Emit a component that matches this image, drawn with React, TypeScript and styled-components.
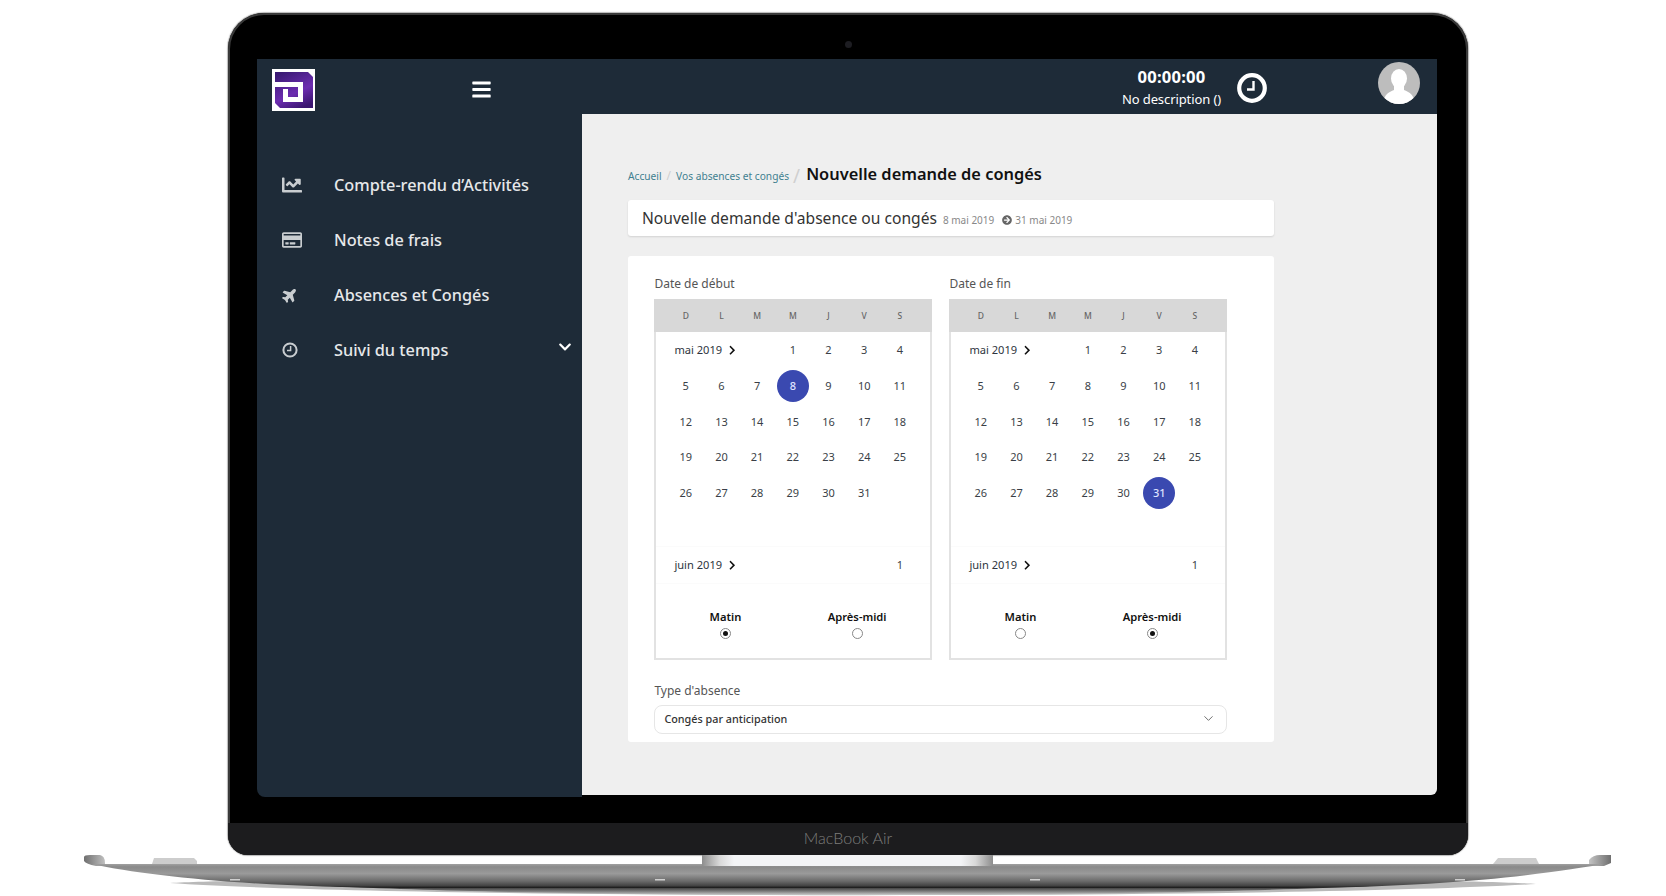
import React from "react";
import styled, { createGlobalStyle } from "styled-components";
import { FaBars, FaChartLine, FaRegCreditCard, FaPlane, FaChevronDown, FaChevronRight, FaArrowCircleRight } from "react-icons/fa";
import { ChevronDown } from "lucide-react";

const FONT = `"Noto Sans", "Open Sans", sans-serif`;

const Global = createGlobalStyle`
  * { box-sizing: border-box; }
  html, body { margin: 0; padding: 0; background: #fff; overflow: hidden; }
  body { font-family: ${FONT}; width: 1666px; height: 896px; }
`;

const Stage = styled.div`
  width: 1666px;
  height: 896px;
  padding-top: 13px;
  display: flex;
  flex-direction: column;
  background: #fff;
  overflow: hidden;
`;
const Lid = styled.div`
  width: 1240px;
  height: 842px;
  margin-left: 228px;
  display: flex;
  flex-direction: column;
  background: #000;
  border-radius: 36px 36px 20px 20px;
  box-shadow: inset 0 0 0 2px #3a3a3a, 0 0 1px 1px #b8b8b8;
  overflow: hidden;
`;
const CameraBar = styled.div`
  height: 46px;
  flex: none;
  display: flex;
  align-items: center;
  justify-content: center;
`;
const Camera = styled.span`
  width: 7px;
  height: 7px;
  margin-top: 16px;
  border-radius: 50%;
  background: #1d1d22;
`;
const Screen = styled.div`
  height: 738px;
  flex: none;
  margin: 0 31px 0 29px;
  display: flex;
  flex-direction: column;
`;
const TopBar = styled.header`
  height: 55px;
  flex: none;
  display: flex;
  align-items: flex-start;
  background: #1e2b38;
  padding: 0 17px 0 15px;
  color: #fff;
`;
const LogoBox = styled.svg`
  width: 43px;
  height: 42px;
  margin-top: 10px;
  flex: none;
`;
const MenuButton = styled.span`
  margin: 20px 0 0 156px;
  display: flex;
  font-size: 21px;
  color: #fff;
`;
const TimerBlock = styled.div`
  margin-left: auto;
  display: flex;
  flex-direction: column;
  align-items: center;
  padding-top: 6px;
`;
const TimerValue = styled.div`
  font-size: 16.6px;
  font-weight: 700;
  line-height: 24px;
  letter-spacing: 0.2px;
`;
const TimerNote = styled.div`
  font-size: 13px;
  line-height: 21px;
  letter-spacing: -0.1px;
`;
const ClockIcon = styled.svg`
  width: 30px;
  height: 30px;
  margin: 14px 111px 0 16px;
  flex: none;
`;
const AvatarIcon = styled.svg`
  width: 42px;
  height: 42px;
  margin-top: 3px;
  flex: none;
`;
const Body = styled.div`
  flex: 1;
  display: flex;
  align-items: flex-start;
  min-height: 0;
`;
const Sidebar = styled.nav`
  width: 325px;
  height: 683px;
  flex: none;
  padding-top: 43px;
  background: #1e2b38;
  border-bottom-left-radius: 8px;
`;
const NavRow = styled.div`
  height: 55.2px;
  display: flex;
  align-items: center;
  padding-left: 25px;
  color: #e6e8ea;
  font-size: 16.3px;
  font-weight: 500;
`;
const NavIcon = styled.span`
  width: 52px;
  flex: none;
  display: flex;
  color: #c9cdd0;
  font-size: ${(p) => p.$size || 20}px;
  svg { transform: ${(p) => (p.$rot ? `rotate(${p.$rot}deg)` : "none")}; }
`;
const NavChevron = styled.span`
  margin-left: auto;
  margin-right: 10px;
  margin-top: -7px;
  display: flex;
  font-size: 14px;
  color: #fff;
`;
const Content = styled.main`
  flex: 1;
  height: 681px;
  background: #efefef;
  padding: 48px 0 0 46px;
  border-bottom-right-radius: 6px;
`;
const Crumbs = styled.div`
  height: 24px;
  display: flex;
  align-items: center;
  color: #3f7f8f;
  font-size: 10.2px;
  padding-top: 3px;
`;
const CrumbSep = styled.span`
  color: #d0d0d0;
  margin: ${(p) => (p.$big ? "0 4px 0 4px" : "0 5px")};
  font-size: ${(p) => p.$big || 12}px;
`;
const CrumbTitle = styled.h1`
  margin: -4px 0 0 2px;
  font-size: 16.4px;
  font-weight: 600;
  color: #111;
`;
const HeadCard = styled.div`
  width: 646px;
  height: 36px;
  margin-top: 14px;
  display: flex;
  align-items: center;
  padding: 0 14px;
  background: #fff;
  border-radius: 3px;
  box-shadow: 0 1px 2px rgba(0, 0, 0, 0.12);
`;
const HeadTitle = styled.span`
  font-size: 15.6px;
  color: #333;
  margin-top: -1px;
`;
const HeadDates = styled.span`
  display: flex;
  align-items: center;
  margin: 3px 0 0 6px;
  font-size: 10px;
  color: #888;
  gap: 3px;
  svg { color: #666; font-size: 10px; margin-left: 5px; }
`;
const FormCard = styled.section`
  width: 646px;
  height: 486px;
  margin-top: 20px;
  padding: 18px 26px 0 26.4px;
  background: #fff;
  border-radius: 3px;
`;
const CalRow = styled.div`
  display: flex;
  gap: 17px;
`;
const CalColumn = styled.div`
  width: 278px;
`;
const FieldLabel = styled.div`
  height: 18px;
  line-height: 18px;
  font-size: 12px;
  color: #555;
  padding-top: 1px;
`;
const Calendar = styled.div`
  margin-top: 7px;
  height: 361px;
  border: solid #e2e2e2;
  border-width: 0 2px 2px;
  background: #fff;
`;
const WeekHead = styled.div`
  height: 33px;
  margin: 0 -2px;
  padding: 0 13.5px;
  display: grid;
  grid-template-columns: repeat(7, 35.7px);
  align-items: center;
  background: #d8d8d8;
  font-size: 8.5px;
  font-weight: 500;
  color: #666;
  text-align: center;
`;
const MonthGrid = styled.div`
  padding: 0 11.5px;
  display: grid;
  grid-template-columns: repeat(7, 35.7px);
  grid-template-rows: repeat(${(p) => p.$rows}, 35.7px);
  align-items: center;
  justify-items: center;
  font-size: 11px;
  color: #3a3f47;
  border-bottom: 1px solid #fbfbfb;
`;
const MonthLabel = styled.div`
  grid-column: span 3;
  justify-self: start;
  padding-left: 6.5px;
  display: flex;
  align-items: center;
  gap: 5px;
  font-size: 11.1px;
  color: #2e3540;
  svg { font-size: 10.5px; color: #111; }
`;
const Day = styled.div`
  grid-column: ${(p) => (p.$col ? p.$col : "auto")};
  width: 32px;
  height: 32px;
  display: flex;
  align-items: center;
  justify-content: center;
  border-radius: 50%;
  background: ${(p) => (p.$on ? "#3a49b0" : "transparent")};
  color: ${(p) => (p.$on ? "#dfe3ff" : "inherit")};
  font-weight: ${(p) => (p.$on ? 500 : 400)};
`;
const Periods = styled.div`
  display: grid;
  grid-template-columns: 131.7px 131.7px;
  padding: 24px 0 0 3.2px;
`;
const Period = styled.div`
  display: flex;
  flex-direction: column;
  align-items: center;
  gap: 3px;
`;
const PeriodName = styled.div`
  font-size: 11.2px;
  line-height: 17px;
  font-weight: 600;
  color: #111;
`;
const Radio = styled.span`
  width: 11px;
  height: 11px;
  border-radius: 50%;
  border: 1px solid #888;
  background: #fff;
  display: flex;
  align-items: center;
  justify-content: center;
  &::after {
    content: "";
    width: 5px;
    height: 5px;
    border-radius: 50%;
    background: ${(p) => (p.$on ? "#111" : "transparent")};
  }
`;
const TypeField = styled.div`
  margin-top: 21px;
`;
const SelectBox = styled.div`
  margin-top: 6px;
  width: 572.5px;
  height: 29px;
  display: flex;
  align-items: center;
  justify-content: space-between;
  padding: 0 10px 2px 9px;
  border: 1px solid #e6e6e6;
  border-radius: 8px;
  font-size: 10.8px;
  font-weight: 500;
  color: #333;
  svg { color: #666; }
`;
const Spacer = styled.div`
  height: 26px;
  flex: none;
`;
const Chin = styled.div`
  height: 32px;
  flex: none;
  display: flex;
  align-items: center;
  justify-content: center;
  padding-bottom: 3px;
  background: #1c1c1e;
  color: #7c7c7c;
  font-family: Lato, "Noto Sans", sans-serif;
  font-size: 16px;
  font-weight: 300;
`;
const BaseArt = styled.svg`
  display: block;
  flex: none;
  width: 1666px;
  height: 41px;
`;

const WEEK = ["D", "L", "M", "M", "J", "V", "S"];
const MAY = Array.from({ length: 31 }, (_, i) => i + 1);

function Cal({ selected, morning, title }: { selected: number; morning: boolean; title: string }) {
  return (
    <CalColumn>
      <FieldLabel>{title}</FieldLabel>
      <Calendar>
        <WeekHead>{WEEK.map((d, i) => <span key={i}>{d}</span>)}</WeekHead>
        <MonthGrid $rows={6}>
          <MonthLabel>mai 2019 <FaChevronRight /></MonthLabel>
          {MAY.map((d) => <Day key={d} $on={d === selected}>{d}</Day>)}
        </MonthGrid>
        <MonthGrid $rows={1}>
          <MonthLabel>juin 2019 <FaChevronRight /></MonthLabel>
          <Day $col={7}>1</Day>
        </MonthGrid>
        <Periods>
          <Period><PeriodName>Matin</PeriodName><Radio $on={morning} /></Period>
          <Period><PeriodName>Après-midi</PeriodName><Radio $on={!morning} /></Period>
        </Periods>
      </Calendar>
    </CalColumn>
  );
}

function Logo() {
  return (
    <LogoBox viewBox="0 0 43 42">
      <defs>
        <linearGradient id="lg" x1="0.2" y1="0" x2="0.7" y2="1">
          <stop offset="0" stopColor="#3a1a74" />
          <stop offset="0.6" stopColor="#6c2cb0" />
          <stop offset="1" stopColor="#3a1570" />
        </linearGradient>
      </defs>
      <rect width="43" height="42" fill="#fff" />
      <path d="M3 3H36L41 8V39H8L3 34Z" fill="url(#lg)" />
      <path d="M3 13H31V33H11V20H16V28H26V18H3Z" fill="#fff" />
    </LogoBox>
  );
}

function SmallClock() {
  return (
    <svg width="16" height="16" viewBox="0 0 16 16">
      <circle cx="8" cy="8" r="6.6" fill="none" stroke="currentColor" strokeWidth="2" />
      <path d="M8.600 4V8.600H5" fill="none" stroke="currentColor" strokeWidth="1.500" />
    </svg>
  );
}

export default function App() {
  return (
    <Stage>
      <Global />
      <Lid>
        <CameraBar><Camera /></CameraBar>
        <Screen>
          <TopBar>
            <Logo />
            <MenuButton><FaBars /></MenuButton>
            <TimerBlock>
              <TimerValue>00:00:00</TimerValue>
              <TimerNote>No description ()</TimerNote>
            </TimerBlock>
            <ClockIcon viewBox="0 0 30 30">
              <circle cx="15" cy="15" r="12.8" fill="none" stroke="#fff" strokeWidth="4.2" />
              <path d="M16.500 8V16.500H10" fill="none" stroke="#fff" strokeWidth="2.4" />
            </ClockIcon>
            <AvatarIcon viewBox="0 0 42 42">
              <defs>
                <clipPath id="av"><circle cx="21" cy="21" r="21" /></clipPath>
              </defs>
              <g clipPath="url(#av)">
                <rect width="42" height="42" fill="#bdbdbd" />
                <ellipse cx="21" cy="16.500" rx="8" ry="9.500" fill="#fff" />
                <path d="M16 24 H26 V28 C31 30 36 32 37 42 H5 C6 32 11 30 16 28Z" fill="#fff" />
              </g>
            </AvatarIcon>
          </TopBar>
          <Body>
            <Sidebar>
              <NavRow><NavIcon><FaChartLine /></NavIcon>Compte-rendu d’Activités</NavRow>
              <NavRow><NavIcon><FaRegCreditCard /></NavIcon>Notes de frais</NavRow>
              <NavRow><NavIcon $size={16} $rot={-45}><FaPlane /></NavIcon>Absences et Congés</NavRow>
              <NavRow>
                <NavIcon $size={16}><SmallClock /></NavIcon>Suivi du temps
                <NavChevron><FaChevronDown /></NavChevron>
              </NavRow>
            </Sidebar>
            <Content>
              <Crumbs>
                Accueil<CrumbSep>/</CrumbSep>Vos absences et congés<CrumbSep $big={19}>/</CrumbSep>
                <CrumbTitle>Nouvelle demande de congés</CrumbTitle>
              </Crumbs>
              <HeadCard>
                <HeadTitle>Nouvelle demande d'absence ou congés</HeadTitle>
                <HeadDates>8 mai 2019 <FaArrowCircleRight /> 31 mai 2019</HeadDates>
              </HeadCard>
              <FormCard>
                <CalRow>
                  <Cal title="Date de début" selected={8} morning />
                  <Cal title="Date de fin" selected={31} morning={false} />
                </CalRow>
                <TypeField>
                  <FieldLabel>Type d'absence</FieldLabel>
                  <SelectBox>Congés par anticipation <ChevronDown size={15} strokeWidth={1.5} /></SelectBox>
                </TypeField>
              </FormCard>
            </Content>
          </Body>
        </Screen>
        <Spacer />
        <Chin>MacBook Air</Chin>
      </Lid>
      <BaseArt viewBox="0 0 1666 41">
        <defs>
          <linearGradient id="body" x1="0" y1="9" x2="0" y2="33" gradientUnits="userSpaceOnUse">
            <stop offset="0" stopColor="#a0a0a0" />
            <stop offset="0.12" stopColor="#8a8a8a" />
            <stop offset="0.4" stopColor="#9a9a9a" />
            <stop offset="0.72" stopColor="#696969" />
            <stop offset="0.9" stopColor="#444" />
            <stop offset="1" stopColor="#161616" />
          </linearGradient>
          <linearGradient id="shade" x1="0" y1="31" x2="0" y2="41" gradientUnits="userSpaceOnUse">
            <stop offset="0" stopColor="#222" />
            <stop offset="0.5" stopColor="#777" />
            <stop offset="1" stopColor="#e0e0e0" />
          </linearGradient>
          <linearGradient id="notch" x1="702" y1="0" x2="993" y2="0" gradientUnits="userSpaceOnUse">
            <stop offset="0" stopColor="#8d8d8d" />
            <stop offset="0.06" stopColor="#d8d8d8" />
            <stop offset="0.11" stopColor="#f3f4f6" />
            <stop offset="0.89" stopColor="#f3f4f6" />
            <stop offset="0.94" stopColor="#d8d8d8" />
            <stop offset="1" stopColor="#8d8d8d" />
          </linearGradient>
          <linearGradient id="footL" x1="84" y1="0" x2="106" y2="0" gradientUnits="userSpaceOnUse">
            <stop offset="0" stopColor="#6f6f6f" />
            <stop offset="1" stopColor="#c4c4c4" />
          </linearGradient>
          <linearGradient id="footR" x1="1611" y1="0" x2="1589" y2="0" gradientUnits="userSpaceOnUse">
            <stop offset="0" stopColor="#6f6f6f" />
            <stop offset="1" stopColor="#c4c4c4" />
          </linearGradient>
        </defs>
        <path d="M170 28C400 44 1300 44 1536 29C1420 20 300 20 170 28Z" fill="#b9b9b9" />
        <path d="M330 31C560 43 1120 43 1370 31Z" fill="url(#shade)" />
        <path d="M152 9L154 3H194L197 6V9Z" fill="#cdcdcd" />
        <path d="M1493 9L1498 3H1536L1539 9Z" fill="#cdcdcd" />
        <path d="M84 2Q84 0 90 0H100Q105 1 105 8L105 11H96Q86 9 84 6Z" fill="url(#footL)" />
        <path d="M1611 0V8L1604 11H1589V5Q1593 0 1600 0Z" fill="url(#footR)" />
        <path d="M92 9H1604C1560 16 1470 32 1290 33H400C260 32 150 22 92 9Z" fill="url(#body)" />
        <rect x="702" y="0" width="291" height="11" fill="url(#notch)" />
        <rect x="230" y="24" width="10" height="1.500" fill="#cfcfcf" />
        <rect x="655" y="24" width="10" height="1.500" fill="#cfcfcf" />
        <rect x="1030" y="24" width="10" height="1.500" fill="#cfcfcf" />
        <rect x="1455" y="24" width="10" height="1.500" fill="#cfcfcf" />
      </BaseArt>
    </Stage>
  );
}
